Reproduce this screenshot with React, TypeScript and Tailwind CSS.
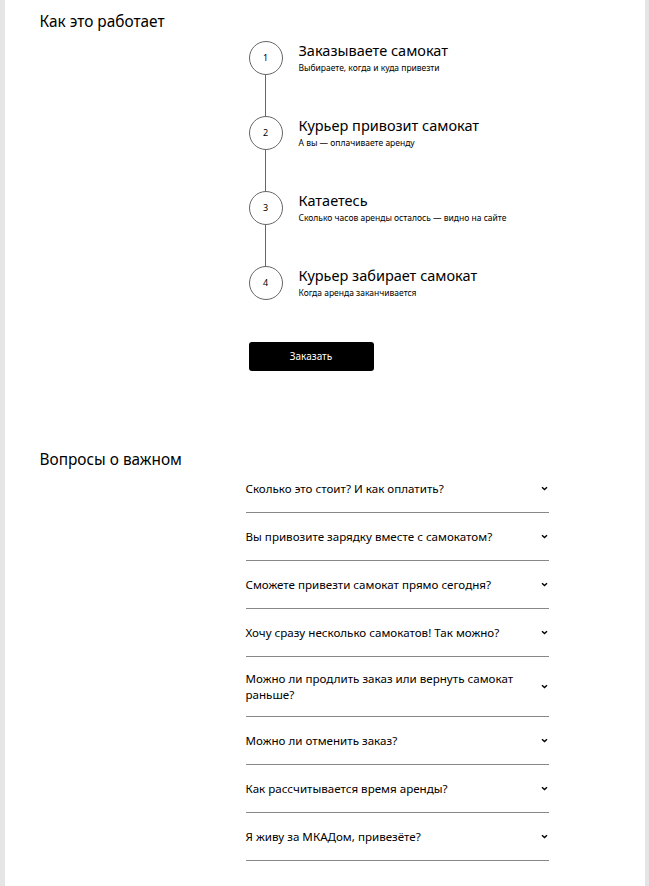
const steps = [
  { n: 1, title: "Заказываете самокат", text: "Выбираете, когда и куда привезти" },
  { n: 2, title: "Курьер привозит самокат", text: "А вы — оплачиваете аренду" },
  { n: 3, title: "Катаетесь", text: "Сколько часов аренды осталось — видно на сайте" },
  { n: 4, title: "Курьер забирает самокат", text: "Когда аренда заканчивается" },
];

const questions = [
  "Сколько это стоит? И как оплатить?",
  "Вы привозите зарядку вместе с самокатом?",
  "Сможете привезти самокат прямо сегодня?",
  "Хочу сразу несколько самокатов! Так можно?",
  "Можно ли продлить заказ или вернуть самокат раньше?",
  "Можно ли отменить заказ?",
  "Как рассчитывается время аренды?",
  "Я живу за МКАДом, привезёте?",
];

function Chevron() {
  return (
    <svg width="7" height="5" viewBox="0 0 7 5" fill="none" className="mr-[1px] shrink-0">
      <path d="M1 1.2 3.5 3.6 6 1.2" stroke="#000" strokeWidth="1.4" />
    </svg>
  );
}

export default function App() {
  return (
    <div className="min-h-[886px] bg-[#e5e5e5] font-['Noto_Sans',sans-serif] text-black">
      <div className="mx-auto flex min-h-[886px] w-[640px] flex-col bg-white pb-[26px]">
        <h2 className="ml-[35px] mt-[13px] text-[15.4px] leading-[18px]">Как это работает</h2>

        <div className="ml-[244px] mt-[10px] flex flex-col">
          {steps.map((s, i) => (
            <div key={s.n} className="flex">
              <div className="flex w-[34px] flex-col items-center">
                <div className="flex h-[34px] w-[34px] items-center justify-center rounded-full border border-[#666] text-[9px]">
                  {s.n}
                </div>
                {i < steps.length - 1 && <div className="h-[41px] w-px bg-[#666]" />}
              </div>
              <div className="ml-[16px] flex flex-col">
                <p className="text-[14.5px] leading-[18px]">{s.title}</p>
                <p className="mt-[3px] text-[8.5px] leading-[12px]">{s.text}</p>
              </div>
            </div>
          ))}

          <button className="mt-[42px] flex h-[29px] w-[125px] items-center justify-center rounded-[3px] bg-black text-[10px] text-white">
            Заказать
          </button>
        </div>

        <h2 className="ml-[35px] mt-[80px] text-[15.4px] leading-[18px]">Вопросы о важном</h2>

        <div className="ml-[241px] mt-[-4px] flex w-[303px] flex-col">
          {questions.map((q, i) => (
            <div
              key={q}
              className={`flex items-center justify-between gap-[16px] border-b border-[#888] ${i === 4 ? "h-[60px]" : "h-[48px]"}`}
            >
              <span className="text-[11.6px] leading-[16px]">{q}</span>
              <Chevron />
            </div>
          ))}
        </div>
      </div>
    </div>
  );
}
